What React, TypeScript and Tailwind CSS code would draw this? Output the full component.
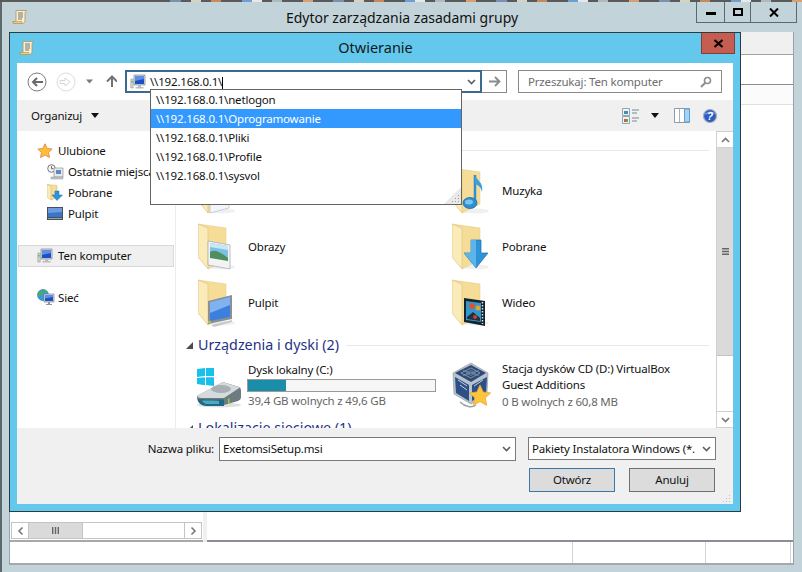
const Scroll = () => (
  <svg width="16" height="16" viewBox="0 0 16 16">
    <path d="M4 1.500h10.500c-1 1-1.500 2-1.500 3v7c0 1.500-1 3-2.500 3H1.500c-1 0-1-1.500-.5-2h3z" fill="#fbf0c8" stroke="#a8945a" strokeWidth="0.8" />
    <path d="M1 12.500h9v2H2z" fill="#e9cf8a" stroke="#a8945a" strokeWidth="0.6" />
    <path d="M6 4h5M6 6h5M6 8h5M6 10h4" stroke="#70708f" strokeWidth="1" />
  </svg>
);

const Chevron = ({ color = "#5f5f5f", up = false }: { color?: string; up?: boolean }) => (
  <svg width="9" height="6" viewBox="0 0 9 6" className={up ? "rotate-180" : ""}>
    <path d="M1 1l3.500 3.500L8 1" fill="none" stroke={color} strokeWidth="1.600" />
  </svg>
);

const Grip = () => (
  <svg width="10" height="10" viewBox="0 0 10 10">
    <path d="M8 1h1v1H8zM5 4h1v1H5zM8 4h1v1H8zM2 7h1v1H2zM5 7h1v1H5zM8 7h1v1H8z" fill="#bdbdbd" />
  </svg>
);

type Kind = "doc" | "music" | "pictures" | "down" | "desktop" | "video";

const Overlay = ({ kind }: { kind: Kind }) => {
  if (kind === "doc") return <path d="M12 20l19 3v18l-19 5z" fill="#f4f4fb" stroke="#b9bccb" strokeWidth="0.7" />;
  if (kind === "music")
    return (
      <g>
        <path d="M23 8v28" stroke="#2f8fd0" strokeWidth="2.500" />
        <path d="M23 8c1 5 9 7 7 17-1-5-4-7-7-8z" fill="#3a9fe0" />
        <ellipse cx="18" cy="36" rx="7" ry="5.500" fill="#2f8fd0" stroke="#1d6cab" strokeWidth="0.8" />
        <ellipse cx="17" cy="35" rx="4" ry="2.500" fill="#7cc4ef" />
      </g>
    );
  if (kind === "pictures")
    return (
      <g>
        <path d="M10 18l22 4v24l-22-4z" fill="#f3f3f3" stroke="#a9aeb4" strokeWidth="0.8" />
        <path d="M12 20l18 3v14l-18-3z" fill="#7cc0e8" />
        <path d="M12 29c5-3 10 0 18 6v3l-18-3z" fill="#4f8f5f" />
        <path d="M12 20l18 3v4l-18-3z" fill="#c9e6f5" />
      </g>
    );
  if (kind === "down")
    return (
      <g>
        <path d="M19 17h10v13h7L24 45 12 30h7z" fill="#2f93d8" stroke="#1e73b5" strokeWidth="0.7" />
        <path d="M19 17h5v28L12 30h7z" fill="#5bb4ec" />
      </g>
    );
  if (kind === "desktop")
    return (
      <g>
        <path d="M10 22l24-6v24l-24 5z" fill="#8c8f94" />
        <path d="M12 23l20-5v20l-20 4z" fill="#3c7fdc" />
        <path d="M12 23l20-5v8l-20 8z" fill="#7fb2ee" />
        <path d="M10 42l3-.500v2l-3 .500z" fill="#a8c84a" />
        <path d="M13 46l21-5v2l-18 5z" fill="#c9c9c9" />
      </g>
    );
  return (
    <g>
      <path d="M12 19l21 3v25l-21-4z" fill="#18232b" />
      <path d="M14 22l15 2v19l-15-2z" fill="#2e9ad4" />
      <circle cx="20" cy="27" r="3" fill="#d8552f" />
      <circle cx="26" cy="29" r="2.500" fill="#e0a52e" />
      <path d="M15 38l6-5 7 6v3l-13-2z" fill="#20303c" />
      <circle cx="23" cy="38" r="2" fill="#c9452f" />
      <path d="M30.500 23v22" stroke="#dfe4e8" strokeWidth="1.500" strokeDasharray="1.500 1.500" />
    </g>
  );
};

const Folder = ({ kind }: { kind: Kind }) => (
  <svg width="38" height="48" viewBox="0 0 38 48">
    <ellipse cx="24" cy="44" rx="13" ry="2.500" fill="#000" opacity="0.06" />
    <path d="M0 1l28 4v32L10 46z" fill="#f6dd97" stroke="#e0c888" strokeWidth="0.5" />
    <path d="M0 1l10 4v41L0 34z" fill="#fbebb9" stroke="#d9bf7c" strokeWidth="0.6" />
    <Overlay kind={kind} />
  </svg>
);

const Star = ({ size = 16 }: { size?: number }) => (
  <svg width={size} height={size} viewBox="0 0 16 16">
    <path d="M8 .8l2.200 4.700 5 .600-3.700 3.400 1 5L8 12l-4.500 2.500 1-5L.800 6.100l5-.600z" fill="#fdbe3c" stroke="#e8893a" strokeWidth="0.9" />
  </svg>
);

const Computer = () => (
  <svg width="16" height="16" viewBox="0 0 16 16">
    <path d="M.800 5h2.400v9H.800z" fill="#d3d6d0" stroke="#8b8f8a" strokeWidth="0.5" />
    <path d="M1.300 7h1.200v1.500H1.300z" fill="#45b045" />
    <path d="M4 1h11v10H4z" fill="#d8dde2" stroke="#7b8189" strokeWidth="0.7" />
    <path d="M5 2h9v8H5z" fill="#1c4fc0" />
    <path d="M5 2h9v3l-9 2z" fill="#5d8fe6" />
    <path d="M8 11h3v2H8zM5.500 13h8v1.500h-8z" fill="#b8bcc0" />
  </svg>
);

const Recent = () => (
  <svg width="17" height="16" viewBox="0 0 17 16">
    <circle cx="4.500" cy="4.500" r="3.800" fill="#f4f4f4" stroke="#6c6c6c" strokeWidth="0.9" />
    <path d="M4.500 2.200v2.500h2" fill="none" stroke="#444" strokeWidth="0.8" />
    <path d="M7 4h9v9H7z" fill="#e7e9eb" stroke="#8f9499" strokeWidth="0.7" />
    <path d="M9 6h5v4H9z" fill="#5a88c8" />
    <path d="M4 13h12v2H4z" fill="#c3c6c9" stroke="#8f9499" strokeWidth="0.5" />
  </svg>
);

const SmallFolderDown = () => (
  <svg width="16" height="17" viewBox="0 0 16 17">
    <path d="M0 .500l10 1v12L4 16z" fill="#f6dd97" stroke="#d9bf7c" strokeWidth="0.6" />
    <path d="M0 .500l4 1.500V16L0 13z" fill="#fbebb9" stroke="#d9bf7c" strokeWidth="0.6" />
    <path d="M8 7h4v4h3.500L10 16.500 5 11h3z" fill="#2f93d8" stroke="#1e73b5" strokeWidth="0.5" />
  </svg>
);

const SmallDesktop = () => (
  <svg width="16" height="14" viewBox="0 0 16 14">
    <path d="M0 0h16v13H0z" fill="#45505c" />
    <path d="M1 1h14v9H1z" fill="#3a76c8" />
    <path d="M1 1h14v4l-14 1z" fill="#6d9de0" />
    <path d="M1 11h14v1H1z" fill="#9aa2aa" />
  </svg>
);

const Globe = () => (
  <svg width="18" height="17" viewBox="0 0 18 17">
    <circle cx="6" cy="6" r="5.500" fill="#3a9ad8" stroke="#2a6ea8" strokeWidth="0.6" />
    <path d="M2 3c2-1 3-1 4 0s0 3-2 3-2 2-3 1zM7 .800c2 0 3 1 3.500 2L8 4z" fill="#4fb04a" />
    <path d="M7 5h10v8H7z" fill="#d6dbe0" stroke="#6f7680" strokeWidth="0.6" />
    <path d="M8 6h8v6H8z" fill="#1c4fc0" />
    <path d="M8 6h8v2l-8 1.500z" fill="#5d8fe6" />
    <path d="M11 13h2v2h-2zM9 15h6v1H9z" fill="#8f969c" />
  </svg>
);

const Drive = () => (
  <svg width="48" height="40" viewBox="0 0 48 40">
    <path d="M2 1l8-1v8l-8 1zM11 0l8-1v9l-8 .100zM2 10l8-.800v8L2 16zM11 9.200h8V18l-8-1z" fill="#19c0ec" />
    <ellipse cx="24" cy="37" rx="22" ry="2.500" fill="#000" opacity="0.12" />
    <path d="M2 28l26-14 16 5c2 .500 2 3 2 5v5c0 2-1 3-3 4l-14 4H10c-5 0-8-3-8-8z" fill="#6d7a80" />
    <path d="M2 28l26-14 17 5.500L29 30H8c-2 0-5 0-6-2z" fill="#d5dadc" />
    <ellipse cx="26" cy="21" rx="10" ry="4" fill="#a7b0b4" />
    <path d="M3 31c5 .500 21 .500 26 .500V38H11c-4 0-8-3-8-7z" fill="#1f6a82" />
    <path d="M7 32.500c5 0 13 0 17 .500v3H12c-2 0-4-1.500-5-3.500z" fill="#4fa8c0" />
    <path d="M33 30.500h1.500v5H33z" fill="#7fe03a" />
  </svg>
);

const VBox = () => (
  <svg width="40" height="47" viewBox="0 0 40 47">
    <path d="M1 11L19 1l17 10-1 21-16 10L2 32z" fill="#b7c2cc" stroke="#8a949c" strokeWidth="0.6" />
    <path d="M3 11l16-8 15 8-15 9z" fill="#2f4a74" />
    <path d="M9 11l10-5 9 5-9 5z" fill="none" stroke="#9fb2c8" strokeWidth="0.7" />
    <path d="M14 11l5-2.500 4.500 2.500-4.500 2.500zM11 8.500l16 5M27 8.500l-16 5" fill="none" stroke="#9fb2c8" strokeWidth="0.5" />
    <path d="M3 15l14 8v16L4 31z" fill="#2c4f86" />
    <path d="M35 15l-15 8v16l14-8z" fill="#2c4f86" />
    <path d="M6 18l9 6M8 23l7 5" stroke="#c5d2e0" strokeWidth="1" />
    <path d="M22 24l9-6" stroke="#c5d2e0" strokeWidth="1" />
    <path d="M8 40c5 5 12 6 16 3" fill="none" stroke="#9aa2aa" strokeWidth="1.500" />
    <path d="M28 23l3.200 7 7.500.900-5.500 5 1.500 7.500-6.700-3.800-6.700 3.800 1.500-7.500-5.500-5 7.500-.900z" fill="#fdc43c" stroke="#e8a93a" strokeWidth="0.8" />
  </svg>
);

const Section = ({ title }: { title: string }) => (
  <div className="flex h-[20px] items-center">
    <span className="ml-[10px] w-[12px]">
      <svg width="7" height="7" viewBox="0 0 7 7"><path d="M7 0v7H0z" fill="#4d4d4d" /></svg>
    </span>
    <span className="whitespace-nowrap text-[14.3px] tracking-normal text-[#1e3287]">{title}</span>
    <span className="ml-[7px] mr-[7px] h-px flex-1 bg-[#e2e9f2]" />
  </div>
);

const FolderItem = ({ kind, name }: { kind: Kind; name?: string }) => (
  <div className="flex h-[56px] w-[254px] items-center">
    <span className="w-[50px]"><Folder kind={kind} /></span>
    {name && <span>{name}</span>}
  </div>
);

const NavRow = ({ icon, text, indent }: { icon: React.ReactNode; text: string; indent?: boolean }) => (
  <div className={`flex h-[21px] items-center whitespace-nowrap ${indent ? "pl-[30px]" : "pl-[20px]"}`}>
    <span className="flex w-[21px] shrink-0 items-center">{icon}</span>
    <span>{text}</span>
  </div>
);

const suggestions = ["\\\\192.168.0.1\\netlogon", "\\\\192.168.0.1\\Oprogramowanie", "\\\\192.168.0.1\\Pliki", "\\\\192.168.0.1\\Profile", "\\\\192.168.0.1\\sysvol"];

const noise = ["#5a5a5a", "#5a5a5a", "#7b8fb0", "#5a5a5a", "#d9d2c0", "#5a5a5a", "#c98a5a", "#5a5a5a", "#5a5a5a", "#6f9fd0", "#e8e8e8", "#5a5a5a", "#b0b8c0", "#5a5a5a", "#5a5a5a", "#d8a070"];

const Dialog = () => (
  <div className="absolute left-[9px] top-[32px] flex h-[480px] w-[732px] flex-col border border-[#2c3a42] bg-[#63c8ec]">
    <div className="flex h-[30px] shrink-0 items-center pl-[9px]">
      <Scroll />
      <span className="flex-1 pr-[24px] text-center text-[14.5px] tracking-normal text-[#0f1a20]">Otwieranie</span>
    </div>
    <div className="absolute right-[5px] top-0 flex h-[21px] w-[34px] items-center justify-center border border-t-0 border-[#7d3f36] bg-[#c55d50]">
      <svg width="11" height="9" viewBox="0 0 11 9"><path d="M1.500 1l8 7M9.500 1l-8 7" stroke="#000" strokeWidth="2.200" /></svg>
    </div>

    <div className="mx-[7px] flex h-[441px] flex-col bg-white">
      {/* nav row */}
      <div className="flex h-[37px] shrink-0 items-center">
        <svg className="ml-[10px]" width="90" height="24" viewBox="0 0 90 24">
          <circle cx="10" cy="12" r="9" fill="#fff" stroke="#7d7d7d" strokeWidth="1" />
          <path d="M16 12H6m4-4l-4 4 4 4" fill="none" stroke="#6a6a6a" strokeWidth="2" />
          <circle cx="39" cy="12" r="9" fill="#fff" stroke="#dcdcdc" strokeWidth="1" />
          <path d="M33 10.500h5V8l5 4-5 4v-2.500h-5z" fill="none" stroke="#d6d6d6" strokeWidth="1" />
          <path d="M59 9.500h7l-3.500 4z" fill="#7a7a7a" />
          <path d="M85 17V7m-5 4.500l5-5 5 5" fill="none" stroke="#737373" strokeWidth="2" />
        </svg>
        <div className="ml-[8px] flex h-[23px] w-[357px] items-center border-2 border-[#3b6a8f] pl-[3px]">
          <Computer />
          <span className="ml-[4px] flex-1 text-[#111]">\\192.168.0.1\<span className="-mb-[3px] inline-block h-[15px] w-px bg-black align-[-3px]" /></span>
          <span className="mr-[4px]"><Chevron /></span>
        </div>
        <div className="flex h-[23px] w-[25px] items-center justify-center border border-l-0 border-[#8a8a8a]">
          <svg width="13" height="11" viewBox="0 0 13 11"><path d="M1 5.500h10M7 1l4.500 4.500L7 10" fill="none" stroke="#8a8a8a" strokeWidth="1.800" /></svg>
        </div>
        <div className="ml-[11px] flex h-[23px] w-[204px] items-center justify-between border border-[#8a8a8a] pl-[9px] pr-[9px] text-[#6d6d6d]">
          <span>Przeszukaj: Ten komputer</span>
          <svg width="12" height="12" viewBox="0 0 12 12"><circle cx="7.500" cy="4.500" r="3" fill="none" stroke="#8e8e8e" strokeWidth="1.600" /><path d="M5.300 6.700L1 11" stroke="#8e8e8e" strokeWidth="2" /></svg>
        </div>
      </div>

      {/* toolbar */}
      <div className="flex h-[31px] shrink-0 items-center bg-[#f0f0f0] pl-[14px]">
        <span>Organizuj</span>
        <svg className="ml-[9px]" width="8" height="5" viewBox="0 0 8 5"><path d="M0 0h8L4 5z" fill="#111" /></svg>
        <div className="ml-auto flex items-center pr-[16px]">
          <svg width="18" height="16" viewBox="0 0 18 16">
            <path d="M.500.500h7v7h-7zM.500 8.500h7v7h-7z" fill="#eef3f8" stroke="#93a4b4" />
            <path d="M2 3h4v3H2z" fill="#3f8fb0" />
            <path d="M2 11h2v3H2z" fill="#d05a3a" /><path d="M4 11h2v3H4z" fill="#6aa83a" />
            <path d="M10 2h7M10 5h5M10 10h7M10 13h5" stroke="#7a8a98" />
          </svg>
          <svg className="ml-[11px]" width="8" height="5" viewBox="0 0 8 5"><path d="M0 0h8L4 5z" fill="#111" /></svg>
          <svg className="ml-[15px]" width="16" height="15" viewBox="0 0 16 15">
            <path d="M.500.500h15v14H.500z" fill="#fff" stroke="#8d9aa6" />
            <path d="M5.500 1v13" stroke="#a8b2bb" />
            <path d="M10.500 1h5v13h-5z" fill="#a8d2f2" stroke="#5ba0d8" />
          </svg>
          <svg className="ml-[13px]" width="14" height="14" viewBox="0 0 14 14">
            <circle cx="7" cy="7" r="6.500" fill="#2a5cc4" stroke="#a9aeb8" strokeWidth="1.200" />
            <path d="M1.500 6c2-4 8-5 11-1-4-1-7-1-11 1z" fill="#7ea6ea" />
            <text x="7" y="11" textAnchor="middle" fontSize="10" fontWeight="700" fontStyle="italic" fill="#fff" fontFamily="'Liberation Sans', sans-serif">?</text>
          </svg>
        </div>
      </div>

      {/* main area */}
      <div className="flex h-[297px] shrink-0 overflow-hidden">
        <div className="w-[159px] shrink-0 overflow-hidden border-r border-[#ececec] pt-[9px]">
          <NavRow icon={<Star />} text="Ulubione" />
          <NavRow indent icon={<Recent />} text="Ostatnie miejsca" />
          <NavRow indent icon={<SmallFolderDown />} text="Pobrane" />
          <NavRow indent icon={<SmallDesktop />} text="Pulpit" />
          <div className="ml-px mt-[21px] flex h-[22px] w-[156px] items-center border border-[#d9d9d9] bg-[#f0f0f0] pl-[18px]">
            <span className="flex w-[21px] items-center"><Computer /></span>
            <span>Ten komputer</span>
          </div>
          <div className="mt-[20px]"><NavRow icon={<Globe />} text="Sieć" /></div>
        </div>

        <div className="min-w-0 flex-1 overflow-hidden pt-[9px]">
          {/* the first header and first label sit under the suggestion list */}
          <Section title="" />
          <div className="mt-[3px] flex flex-wrap pl-[22px]">
            <FolderItem kind="doc" />
            <FolderItem kind="music" name="Muzyka" />
            <FolderItem kind="pictures" name="Obrazy" />
            <FolderItem kind="down" name="Pobrane" />
            <FolderItem kind="desktop" name="Pulpit" />
            <FolderItem kind="video" name="Wideo" />
          </div>
          <div className="mt-[4px]"><Section title="Urządzenia i dyski (2)" /></div>
          <div className="mt-[6px] flex h-[50px]">
            <div className="ml-[19px] flex w-[257px]">
              <span className="mt-[7px] w-[53px]"><Drive /></span>
              <div className="flex flex-col">
                <span className="mt-px h-[16px] leading-[16px]">Dysk lokalny (C:)</span>
                <div className="-ml-px mt-px h-[13px] w-[189px] border border-[#9a9a9a] bg-[#f6f6f6]">
                  <div className="h-full w-[38px] bg-[#1a8ea8]" />
                </div>
                <span className="mt-px h-[16px] leading-[16px] text-[#666]">39,4 GB wolnych z 49,6 GB</span>
              </div>
            </div>
            <span className="mt-[1px] w-[50px]"><VBox /></span>
            <div className="flex flex-col leading-[16px]">
              <span>Stacja dysków CD (D:) VirtualBox</span>
              <span>Guest Additions</span>
              <span className="mt-px text-[#666]">0 B wolnych z 60,8 MB</span>
            </div>
          </div>
          <div className="mt-[7px]"><Section title="Lokalizacje sieciowe (1)" /></div>
        </div>

        <div className="flex w-[17px] shrink-0 flex-col border-l border-[#d0d0d0]">
          <div className="flex h-[17px] items-center justify-center border-y border-[#d0d0d0]"><Chevron color="#777" up /></div>
          <div className="flex h-[208px] items-center justify-center border-b border-[#c4c4c4] bg-[#dadada]">
            <svg width="7" height="7" viewBox="0 0 7 7"><path d="M0 0h7v1.400H0zM0 2.800h7v1.400H0zM0 5.600h7V7H0z" fill="#666" /></svg>
          </div>
          <div className="flex-1" />
          <div className="flex h-[17px] items-center justify-center border-y border-[#d0d0d0]"><Chevron color="#777" /></div>
        </div>
      </div>

      {/* bottom panel */}
      <div className="relative flex-1 bg-[#f0f0f0]">
        <div className="flex items-start pt-[9px]">
          <span className="h-[24px] w-[197px] text-right leading-[24px] text-[#111]">Nazwa pliku:</span>
          <div className="ml-[5px] flex h-[24px] w-[297px] items-center justify-between border border-[#7a7a7a] bg-white pl-[3px] pr-[4px]">
            <span>ExetomsiSetup.msi</span>
            <Chevron />
          </div>
          <div className="ml-[12px] flex h-[23px] w-[188px] items-center justify-between overflow-hidden whitespace-nowrap border border-[#7a7a7a] bg-white pl-[3px] pr-[4px]">
            <span>Pakiety Instalatora Windows (*.</span>
            <Chevron />
          </div>
        </div>
        <div className="mt-[7px] flex gap-[14px] pl-[512px]">
          <div className="flex h-[24px] w-[86px] items-center justify-center border border-[#3b78a8] bg-[#dcdcdc]">Otwórz</div>
          <div className="flex h-[24px] w-[86px] items-center justify-center border border-[#707070] bg-[#dcdcdc]">Anuluj</div>
        </div>
        <div className="absolute bottom-0 right-[2px]"><Grip /></div>
      </div>
    </div>

    {/* address suggestions */}
    <div className="absolute left-[140px] top-[56px] h-[116px] w-[312px] border border-[#646464] bg-white">
      {suggestions.map((s, i) => (
        <div key={s} className={`flex h-[19px] items-center pl-[5px] ${i === 1 ? "bg-[#3399ff] text-white" : ""}`}>{s}</div>
      ))}
      <svg className="absolute bottom-0 right-0" width="17" height="17" viewBox="0 0 17 17">
        <path d="M17 0v17H0z" fill="#e9e9e9" />
        <path d="M14 8h1v1h-1zM11 11h1v1h-1zM14 11h1v1h-1zM8 14h1v1H8zM11 14h1v1h-1zM14 14h1v1h-1z" fill="#9a9a9a" />
      </svg>
    </div>
  </div>
);

export default function App() {
  return (
    <div className="relative flex h-[572px] w-[802px] flex-col overflow-hidden bg-[#c2d4da] font-['Noto_Sans',sans-serif] text-[11.5px] tracking-[-0.18px] text-[#111]">
      <div className="flex h-[2px] shrink-0 bg-[#5a5a5a]">
        <div className="w-[150px]" />
        {noise.concat(noise, noise, noise).map((c, i) => (
          <div key={i} className="h-full flex-1" style={{ backgroundColor: c }} />
        ))}
      </div>

      <div className="flex flex-1 flex-col border-l-2 border-[#5d686d]">
        {/* title bar of the window behind */}
        <div className="relative flex h-[30px] shrink-0 items-center pl-[10px]">
          <Scroll />
          <span className="absolute left-0 right-0 text-center text-[14px] tracking-normal text-[#111]">Edytor zarządzania zasadami grupy</span>
          <div className="absolute right-[5px] top-0 flex h-[21px] border border-t-0 border-[#5d686d]">
            <div className="flex w-[28px] items-center justify-center border-r border-[#5d686d]">
              <div className="mt-[3px] h-[3px] w-[10px] bg-black" />
            </div>
            <div className="flex w-[26px] items-center justify-center border-r border-[#5d686d]">
              <div className="h-[8px] w-[10px] border-2 border-black" />
            </div>
            <div className="flex w-[45px] items-center justify-center">
              <svg width="10" height="9" viewBox="0 0 10 9"><path d="M1 .500l8 8M9 .500l-8 8" stroke="#000" strokeWidth="2" /></svg>
            </div>
          </div>
        </div>

        <div className="ml-[7px] flex h-[533px] w-[785px] shrink-0 flex-col border-l border-r border-[#9aa4a8]">
          <div className="h-[23px] shrink-0 border-b border-[#a3a3a3] bg-[#f0f0f0]" />
          <div className="h-[29px] shrink-0 bg-white" />
          <div className="flex h-[458px] shrink-0">
            <div className="flex w-[193px] flex-col justify-end border-b-2 border-[#a8a8a8] bg-white">
              <div className="mx-px mb-px flex h-[17px] border border-[#c4c4c4]">
                <div className="flex w-[17px] items-center justify-center border-r border-[#c4c4c4]"><span className="rotate-90"><Chevron color="#777" /></span></div>
                <div className="flex w-[54px] items-center justify-center border-r border-[#c4c4c4] bg-[#dadada]">
                  <svg width="7" height="7" viewBox="0 0 7 7"><path d="M0 0h1.400v7H0zM2.800 0h1.400v7H2.800zM5.600 0H7v7H5.600z" fill="#666" /></svg>
                </div>
                <div className="flex-1" />
                <div className="flex w-[17px] items-center justify-center border-l border-[#c4c4c4]"><span className="-rotate-90"><Chevron color="#777" /></span></div>
              </div>
            </div>
            <div className="w-[4px] bg-[#f0f0f0]" />
            <div className="flex-1 border-y border-b-2 border-[#8a8f96] bg-white">
              <div className="h-[20px] border-b border-[#e0e0e0] bg-[#fbfbfb]" />
            </div>
          </div>
          <div className="flex h-[23px] shrink-0 border-b-2 border-[#a8a8a8] bg-white">
            <div className="w-[563px] border-r border-[#d4d4d4]" />
            <div className="w-[133px] border-r border-[#d4d4d4]" />
            <div className="mr-[2px] flex-1 border-r border-[#d4d4d4]" />
          </div>
        </div>
      </div>

      <Dialog />
    </div>
  );
}
